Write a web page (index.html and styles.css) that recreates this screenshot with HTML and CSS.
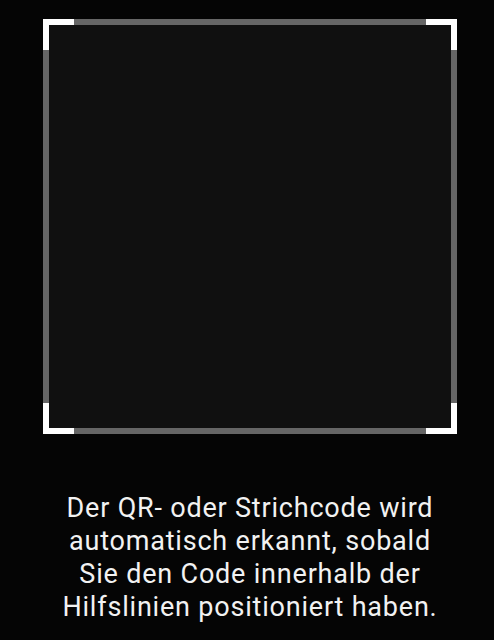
FILE: index.html
```html
<!DOCTYPE html>
<html lang="de">
<head>
    <meta charset="UTF-8">
    <meta name="viewport" content="width=device-width, initial-scale=1.0">
    <title>Code scannen</title>
    <link rel="stylesheet" href="styles.css">
</head>
<body>
    <div class="scanner">
        <div class="frame">
            <span class="corner tl"></span>
            <span class="corner tr"></span>
            <span class="corner bl"></span>
            <span class="corner br"></span>
        </div>
        <p class="hint">Der QR- oder Strichcode wird<br>automatisch erkannt, sobald<br>Sie den Code innerhalb der<br>Hilfslinien positioniert haben.</p>
    </div>
</body>
</html>
```

FILE: styles.css
```css
html, body {
    margin: 0;
    height: 100%;
    background: #050505;
}
body {
    font-family: Roboto, "Noto Sans", sans-serif;
    overflow: hidden;
}
.scanner {
    width: 414px;
    margin-left: 43px;
    padding-top: 19px;
}
.frame {
    position: relative;
    box-sizing: border-box;
    width: 414px;
    height: 415px;
    border: 6px solid #666;
    background: #101010;
}
.corner {
    position: absolute;
    width: 25px;
    height: 25px;
    border: 0 solid #fff;
}
.tl {
    top: -6px;
    left: -6px;
    border-top-width: 6px;
    border-left-width: 6px;
}
.tr {
    top: -6px;
    right: -6px;
    border-top-width: 6px;
    border-right-width: 6px;
}
.bl {
    bottom: -6px;
    left: -6px;
    border-bottom-width: 6px;
    border-left-width: 6px;
}
.br {
    bottom: -6px;
    right: -6px;
    border-bottom-width: 6px;
    border-right-width: 6px;
}
.hint {
    margin: 58px -20px 0;
    text-align: center;
    color: #f2f2f2;
    font-size: 27px;
    letter-spacing: 0.8px;
    line-height: 33px;
}
```
